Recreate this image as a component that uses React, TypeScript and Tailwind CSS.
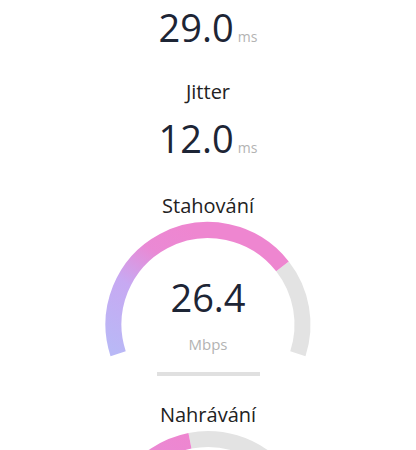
const FONT = "font-['Open_Sans','Noto_Sans',sans-serif]";

type Arc = { from: number; to: number };

// polar point on the gauge (degrees, math convention, y up)
const pt = (deg: number, cx = 110, cy = 104.5, r = 94.5) => {
  const a = (deg * Math.PI) / 180;
  return `${(cx + r * Math.cos(a)).toFixed(2)} ${(cy - r * Math.sin(a)).toFixed(2)}`;
};

const arcPath = ({ from, to }: Arc) => {
  const large = from - to > 180 ? 1 : 0;
  return `M ${pt(from)} A 94.5 94.5 0 ${large} 1 ${pt(to)}`;
};

function Gauge({ id, value, unit, until }: { id: string; value?: string; unit?: string; until: number }) {
  return (
    <div className="relative h-[140px] w-[220px] shrink-0">
      <svg width="220" height="140" viewBox="0 0 220 140" className="block">
        <defs>
          <linearGradient id={id} gradientUnits="userSpaceOnUse" x1="22" y1="134" x2="95" y2="12">
            <stop offset="0" stopColor="#b9b8f6" />
            <stop offset="0.45" stopColor="#c7a9f2" />
            <stop offset="0.75" stopColor="#ea89d4" />
            <stop offset="1" stopColor="#ee86d0" />
          </linearGradient>
        </defs>
        <path d={arcPath({ from: until, to: -18 })} fill="none" stroke="#e3e3e3" strokeWidth="16" />
        <path d={arcPath({ from: 198, to: until })} fill="none" stroke={`url(#${id})`} strokeWidth="16" />
      </svg>
      {value && (
        <div className="absolute inset-x-0 top-0 flex flex-col items-center">
          <div className="mt-[58px] text-[38px] leading-[38px] text-[#1d2535]">{value}</div>
          <div className="mt-[18px] text-[15px] leading-[20px] text-[#b3b3b3]">{unit}</div>
        </div>
      )}
    </div>
  );
}

function Metric({ label, value, className = "" }: { label?: string; value: string; className?: string }) {
  return (
    <div className={`flex shrink-0 flex-col items-center ${className}`}>
      {label && <div className="text-[20px] leading-[28px] text-[#222]">{label}</div>}
      <div className={`flex items-baseline gap-1 ${label ? "mt-[13px]" : ""}`}>
        <span className="text-[38px] leading-[38px] text-[#1d2535]">{value}</span>
        <span className="text-[14px] leading-[14px] text-[#b3b3b3]">ms</span>
      </div>
    </div>
  );
}

export default function App() {
  return (
    <div className={`${FONT} flex h-[450px] w-[416px] flex-col items-center overflow-hidden bg-white pt-[8px]`}>
      <Metric value="29.0" />
      <Metric label="Jitter" value="12.0" className="mt-[32px]" />

      <div className="mt-[35px] shrink-0 text-[20px] leading-[28px] text-[#222]">Stahování</div>
      <Gauge id="dl" value="26.4" unit="Mbps" until={38} />
      <div className="mt-[12px] h-1 w-[103px] shrink-0 bg-[#e0e0e0]" />

      <div className="mt-[25px] shrink-0 text-[20px] leading-[28px] text-[#222]">Nahrávání</div>
      <Gauge id="ul" until={101} />
    </div>
  );
}
